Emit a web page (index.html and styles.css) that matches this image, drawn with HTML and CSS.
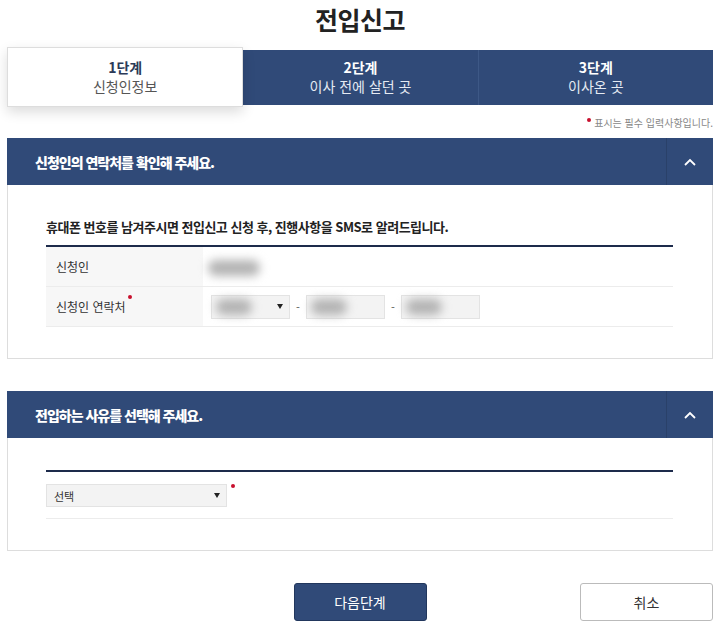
FILE: index.html
```html
<!DOCTYPE html>
<html lang="ko">
<head>
  <meta charset="UTF-8" />
  <meta name="viewport" content="width=device-width, initial-scale=1.0" />
  <title>전입신고</title>
  <link rel="stylesheet" href="styles.css">
</head>
<body>
  <h1>전입신고</h1>

  <ul class="steps">
    <li class="step active"><strong>1단계</strong><span>신청인정보</span></li>
    <li class="step"><strong>2단계</strong><span>이사 전에 살던 곳</span></li>
    <li class="step"><strong>3단계</strong><span>이사온 곳</span></li>
  </ul>

  <p class="required-note"><i class="req"></i>표시는 필수 입력사항입니다.</p>

  <section class="panel">
    <div class="panel-head">
      <h2>신청인의 연락처를 확인해 주세요.</h2>
      <button class="toggle" aria-label="접기">
        <svg width="12" height="8" viewBox="0 0 12 8"><polyline points="1,7 6,2 11,7" fill="none" stroke="#fff" stroke-width="1.8"/></svg>
      </button>
    </div>
    <div class="panel-body">
      <h3>휴대폰 번호를 남겨주시면 전입신고 신청 후, 진행사항을 SMS로 알려드립니다.</h3>
      <table class="form-table">
        <tr>
          <th>신청인</th>
          <td><span class="blur name"></span></td>
        </tr>
        <tr>
          <th>신청인 연락처<i class="req"></i></th>
          <td>
            <div class="phone">
              <div class="field sel"><span class="blur short"></span><b class="arrow"></b></div>
              <span class="dash">-</span>
              <div class="field"><span class="blur short"></span></div>
              <span class="dash">-</span>
              <div class="field"><span class="blur short"></span></div>
            </div>
          </td>
        </tr>
      </table>
    </div>
  </section>

  <section class="panel">
    <div class="panel-head">
      <h2>전입하는 사유를 선택해 주세요.</h2>
      <button class="toggle" aria-label="접기">
        <svg width="12" height="8" viewBox="0 0 12 8"><polyline points="1,7 6,2 11,7" fill="none" stroke="#fff" stroke-width="1.8"/></svg>
      </button>
    </div>
    <div class="panel-body">
      <div class="reason-row">
        <div class="field reason">선택<b class="arrow"></b></div><i class="req"></i>
      </div>
    </div>
  </section>

  <div class="actions">
    <button class="btn primary">다음단계</button>
    <button class="btn cancel">취소</button>
  </div>
</body>
</html>
```

FILE: styles.css
```css
body {
  font-family: "Noto Sans CJK KR", "Noto Sans", sans-serif;
  margin: 0;
  padding: 0 7px;
  color: #333;
  background-color: #fff;
}
h1 {
  margin: 0 0 9px;
  font-size: 25px;
  line-height: 38px;
  text-align: center;
  color: #222;
  letter-spacing: -0.5px;
}
.steps {
  list-style: none;
  margin: 0;
  padding: 0;
  display: flex;
  align-items: center;
}
.step {
  flex: 1;
  height: 55px;
  display: flex;
  flex-direction: column;
  justify-content: center;
  align-items: center;
  background-color: #304a78;
  color: #fff;
  font-size: 14px;
  line-height: 19px;
}
.step + .step + .step {
  border-left: 1px solid #3d5886;
}
.step strong {
  font-weight: 700;
}
.step span {
  color: #e6ebf3;
}
.step.active {
  height: 58px;
  background-color: #fff;
  border: 1px solid #ddd;
  box-shadow: 0 5px 12px rgba(0, 0, 0, 0.14);
  color: #2b3a58;
  position: relative;
  z-index: 1;
}
.step.active span {
  color: #555;
}
.required-note {
  margin: 0;
  height: 31px;
  display: flex;
  justify-content: flex-end;
  align-items: center;
  font-size: 10px;
  color: #888;
}
.req {
  display: inline-block;
  width: 4px;
  height: 4px;
  border-radius: 50%;
  background-color: #c8102e;
  vertical-align: top;
  margin: 0 3px 0 2px;
  position: relative;
  top: -3px;
}
.panel {
  margin-bottom: 32px;
}
.panel-head {
  height: 47px;
  display: flex;
  align-items: center;
  background-color: #304a78;
}
.panel-head h2 {
  flex: 1;
  margin: 0;
  padding-left: 28px;
  font-size: 14px;
  font-weight: 900;
  color: #fff;
  letter-spacing: -1px;
}
.toggle {
  width: 47px;
  height: 47px;
  border: none;
  border-left: 1px solid #2a4169;
  background: none;
  display: flex;
  align-items: center;
  justify-content: center;
  padding: 0;
}
.panel-body {
  border: 1px solid #ddd;
  border-top: none;
  padding: 32px 39px 31px 38px;
}
.panel-body h3 {
  margin: 0 0 8px;
  font-size: 13px;
  line-height: 20px;
  color: #222;
  letter-spacing: -0.5px;
}
.form-table {
  width: 100%;
  border-collapse: collapse;
  border-top: 2px solid #1d2b4b;
}
.form-table th,
.form-table td {
  height: 39px;
  border-bottom: 1px solid #ececec;
  font-size: 12px;
  text-align: left;
  padding: 0 0 0 10px;
}
.form-table th {
  width: 147px;
  background-color: #f7f7f7;
  font-weight: 400;
  color: #333;
}
.form-table td {
  padding-left: 5px;
}
.blur {
  display: inline-block;
  height: 16px;
  border-radius: 8px;
  background-color: #b4b4b4;
  filter: blur(5px);
  vertical-align: middle;
}
.blur.name {
  width: 52px;
}
.blur.short {
  width: 36px;
  margin-left: -2px;
}
.phone {
  display: flex;
  align-items: center;
  gap: 6px;
  padding-left: 3px;
}
.field {
  width: 79px;
  height: 24px;
  box-sizing: border-box;
  border: 1px solid #e3e3e3;
  background-color: #f3f3f3;
  display: flex;
  align-items: center;
  padding: 0 6px;
  font-size: 11px;
  color: #333;
}
.dash {
  font-size: 11px;
  color: #555;
  width: 4px;
}
.arrow {
  margin-left: auto;
  width: 0;
  height: 0;
  border-left: 3px solid transparent;
  border-right: 3px solid transparent;
  border-top: 5px solid #222;
}
.reason-row {
  border-top: 2px solid #1d2b4b;
  border-bottom: 1px solid #ececec;
  padding: 12px 0 11px;
  display: flex;
  align-items: flex-start;
}
.reason {
  width: 181px;
  height: 23px;
  padding: 0 6px 0 7px;
}
.reason-row .req {
  top: 0;
  margin-left: 4px;
}
.actions {
  display: grid;
  grid-template-columns: 1fr 133px 1fr;
}
.btn {
  height: 38px;
  border-radius: 3px;
  font-family: inherit;
  font-size: 14px;
  cursor: pointer;
}
.btn.primary {
  grid-column: 2;
  background-color: #304a78;
  border: 1px solid #22375d;
  color: #fff;
}
.btn.cancel {
  grid-column: 3;
  justify-self: end;
  width: 133px;
  background-color: #fff;
  border: 1px solid #bbb;
  color: #333;
}
```
